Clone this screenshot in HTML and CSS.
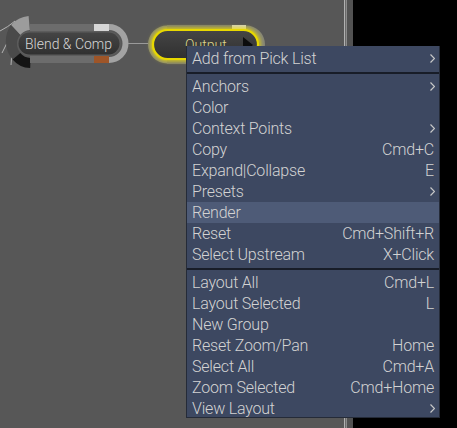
FILE: index.html
```html
<!DOCTYPE html>
<html lang="en">
<head>
    <meta charset="UTF-8">
    <meta name="viewport" content="width=device-width, initial-scale=1.0">
    <title>Schematic</title>
    <link rel="stylesheet" href="styles.css">
</head>
<body>
    <div class="workspace">
        <div class="canvas">
            <svg class="graph" width="344" height="428" viewBox="0 0 344 428">
                <defs>
                    <linearGradient id="body-fill" x1="0" y1="0" x2="0" y2="1">
                        <stop offset="0" stop-color="#454545"/>
                        <stop offset="1" stop-color="#303030"/>
                    </linearGradient>
                    <filter id="glow" x="-20%" y="-50%" width="140%" height="200%">
                        <feGaussianBlur stdDeviation="2.2"/>
                    </filter>
                    <clipPath id="above-menu">
                        <rect x="0" y="0" width="344" height="46"/>
                    </clipPath>
                </defs>

                <!-- inputs coming into Blend & Comp -->
                <g class="wire-in">
                    <path d="M0 31 Q8 27 15 21"/>
                    <path d="M2 53 Q7 41 15 31"/>
                    <path d="M13 51 Q11 58 11 65"/>
                </g>
                <path d="M28.6 16.1 A28 28 0 0 0 11 25 L20.3 35 A14 14 0 0 1 29.8 30.1 Z" fill="#9c9c9c"/>
                <path d="M11 25 A28 28 0 0 0 12.6 59.4 L20.3 53 A14 14 0 0 1 20.3 35 Z" fill="#4a4a4a"/>
                <path d="M12.6 59.4 A24 24 0 0 0 30.2 68 L30.5 58 A14 14 0 0 1 20.3 53 Z" fill="#141414"/>

                <!-- Blend & Comp -->
                <rect x="30" y="24" width="64" height="7" fill="#6c6c6c"/>
                <rect x="94" y="24" width="15" height="7" fill="#d6d6d6"/>
                <rect x="30" y="56" width="64" height="7" fill="#6c6c6c"/>
                <rect x="94" y="56" width="15" height="7" fill="#9e5528"/>
                <path d="M109 24 A19.5 19.5 0 0 1 109 63 L109 57 A13.5 13.5 0 0 0 109 30 Z" fill="#a3a3a3"/>
                <rect x="17" y="31" width="104" height="25" rx="12.5" fill="#5c5c5c"/>
                <rect x="18.5" y="32.5" width="101" height="22" rx="11" fill="url(#body-fill)"/>
                <text class="node-label" x="25" y="49">Blend &amp; Comp</text>

                <line x1="128" y1="43.5" x2="149" y2="43.5" class="wire"/>

                <!-- Output, selected -->
                <path d="M167 25.5 A19 19 0 0 0 167 63.5 L167 58 A13.5 13.5 0 0 1 167 31 Z" fill="#858576"/>
                <rect x="167" y="25" width="65" height="6" fill="#7a7a72"/>
                <rect x="232" y="25" width="14" height="6" fill="#d2d0bc"/>
                <rect x="167" y="58" width="79" height="6" fill="#7a7a72"/>
                <path d="M246 25.5 A19 19 0 0 1 246 63.5 L246 58 A13.5 13.5 0 0 0 246 31 Z" fill="#858576"/>
                <rect x="153" y="30" width="105" height="29" rx="14.5" fill="none" stroke="#f2e000" stroke-width="4" filter="url(#glow)"/>
                <rect x="153" y="30" width="105" height="29" rx="14.5" fill="url(#body-fill)" stroke="#e8d800" stroke-width="2.2"/>
                <text class="node-label selected" x="185" y="50" clip-path="url(#above-menu)">Output</text>
                <path d="M243 37 L253 45 L243 53 Z" fill="#0c0c0c"/>
            </svg>
        </div>
        <div class="divider"></div>
        <div class="panel"></div>

        <div class="menu">
            <div class="item"><span>Add from Pick List</span><svg class="more" width="5" height="9" viewBox="0 0 5 9"><path d="M0.5 0.5 L4.5 4.5 L0.5 8.5"/></svg></div>
            <div class="sep"></div>
            <div class="item"><span>Anchors</span><svg class="more" width="5" height="9" viewBox="0 0 5 9"><path d="M0.5 0.5 L4.5 4.5 L0.5 8.5"/></svg></div>
            <div class="item"><span>Color</span></div>
            <div class="item"><span>Context Points</span><svg class="more" width="5" height="9" viewBox="0 0 5 9"><path d="M0.5 0.5 L4.5 4.5 L0.5 8.5"/></svg></div>
            <div class="item"><span>Copy</span><span>Cmd+C</span></div>
            <div class="item"><span>Expand|Collapse</span><span>E</span></div>
            <div class="item"><span>Presets</span><svg class="more" width="5" height="9" viewBox="0 0 5 9"><path d="M0.5 0.5 L4.5 4.5 L0.5 8.5"/></svg></div>
            <div class="item active"><span>Render</span></div>
            <div class="item"><span>Reset</span><span>Cmd+Shift+R</span></div>
            <div class="item"><span>Select Upstream</span><span>X+Click</span></div>
            <div class="sep"></div>
            <div class="item"><span>Layout All</span><span>Cmd+L</span></div>
            <div class="item"><span>Layout Selected</span><span>L</span></div>
            <div class="item"><span>New Group</span></div>
            <div class="item"><span>Reset Zoom/Pan</span><span>Home</span></div>
            <div class="item"><span>Select All</span><span>Cmd+A</span></div>
            <div class="item"><span>Zoom Selected</span><span>Cmd+Home</span></div>
            <div class="item"><span>View Layout</span><svg class="more" width="5" height="9" viewBox="0 0 5 9"><path d="M0.5 0.5 L4.5 4.5 L0.5 8.5"/></svg></div>
        </div>
    </div>
</body>
</html>
```

FILE: styles.css
```css
body {
    margin: 0;
    padding: 0;
    font-family: Roboto, "Liberation Sans", sans-serif;
    font-weight: 300;
    background-color: #000;
}
.workspace {
    position: relative;
    display: flex;
    height: 428px;
    overflow: hidden;
}
.canvas {
    width: 344px;
    flex-shrink: 0;
    background-color: #575757;
}
.graph {
    display: block;
}
.wire-in path {
    fill: none;
    stroke: #b4b4b4;
    stroke-width: 1;
}
.wire {
    stroke: #9a9a9a;
    stroke-width: 1;
}
.node-label {
    font-family: Roboto, "Liberation Sans", sans-serif;
    font-weight: 300;
    font-size: 14px;
    fill: #d6d6d6;
}
.node-label.selected {
    fill: #dcd68a;
}
.divider {
    width: 9px;
    flex-shrink: 0;
    background: linear-gradient(to right, #b2b2b2 0 1px, #6a6a6a 1px 2px, #8c8c8c 2px 3px, #525252 3px);
}
.panel {
    flex: 1;
    background-color: #000;
}
.menu {
    position: absolute;
    left: 186px;
    top: 46px;
    width: 254px;
    height: 372px;
    box-sizing: border-box;
    padding-top: 2px;
    overflow: hidden;
    background-color: #3d4861;
    border: 1px solid #252b38;
    border-top: none;
    color: #d3d3d3;
    font-size: 16px;
    letter-spacing: -0.2px;
}
.item {
    display: flex;
    justify-content: space-between;
    align-items: center;
    height: 21px;
    line-height: 21px;
    padding: 0 5px 0 5px;
    white-space: nowrap;
}
.item.active {
    background-color: #4e5b77;
}
.more {
    margin-right: -1px;
}
.more path {
    fill: none;
    stroke: #c9c9c9;
    stroke-width: 1.2;
}
.sep {
    height: 2px;
    margin: 3px 0 2px 0;
    background-color: #181d28;
}
```
